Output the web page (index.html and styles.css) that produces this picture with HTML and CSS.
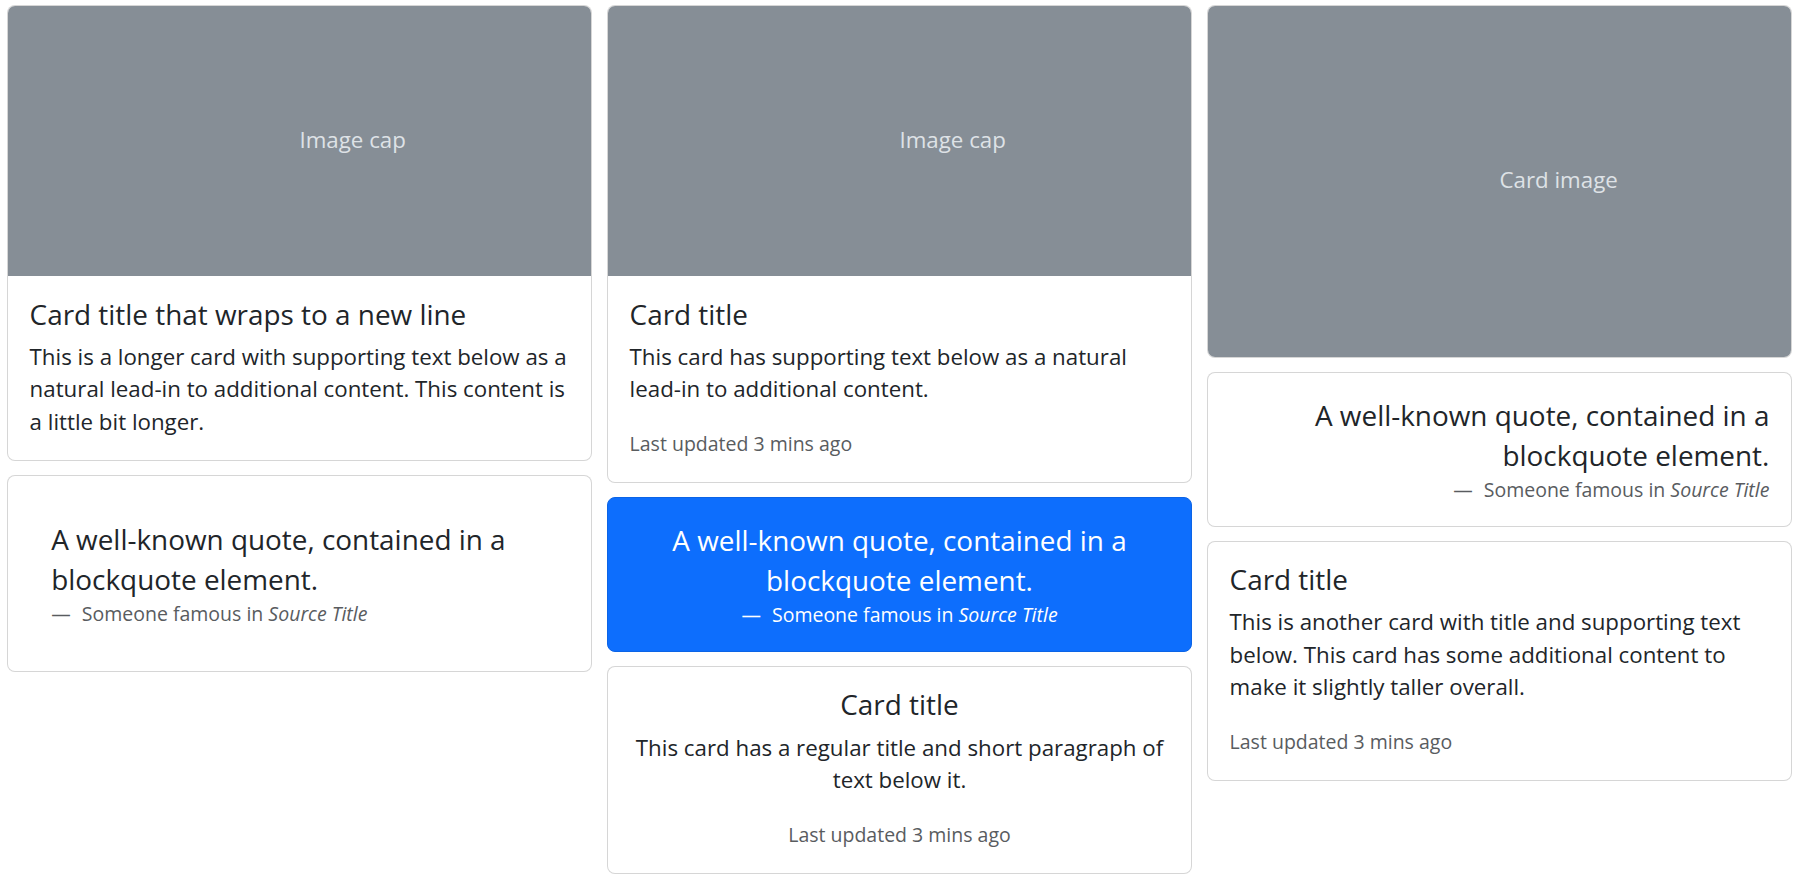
FILE: index.html
```html
<!DOCTYPE html>
<html lang="en">
<head>
<meta charset="utf-8">
<title>Masonry cards</title>
<link rel="stylesheet" href="styles.css">
</head>
<body>
<main class="masonry">
  <div class="stack">
    <div class="card">
      <svg class="ph ph-cap" width="100%" height="270" role="img" aria-label="Placeholder: Image cap">
        <rect width="100%" height="100%" fill="#868e96"></rect>
        <text x="50%" y="50%" dy=".3em">Image cap</text>
      </svg>
      <div class="card-body">
        <h5 class="card-title">Card title that wraps to a new line</h5>
        <p class="card-text">This is a longer card with supporting text below as a natural lead-in to additional content. This content is a little bit longer.</p>
      </div>
    </div>
    <div class="card pad">
      <figure class="quote pad">
        <blockquote class="blockquote"><p>A well-known quote, contained in a blockquote element.</p></blockquote>
        <figcaption class="blockquote-footer">Someone famous in <cite title="Source Title">Source Title</cite></figcaption>
      </figure>
    </div>
  </div>

  <div class="stack">
    <div class="card">
      <svg class="ph ph-cap" width="100%" height="270" role="img" aria-label="Placeholder: Image cap">
        <rect width="100%" height="100%" fill="#868e96"></rect>
        <text x="50%" y="50%" dy=".3em">Image cap</text>
      </svg>
      <div class="card-body">
        <h5 class="card-title">Card title</h5>
        <p class="card-text">This card has supporting text below as a natural lead-in to additional content.</p>
        <p class="card-text"><small class="muted">Last updated 3 mins ago</small></p>
      </div>
    </div>
    <div class="card pad primary center">
      <figure class="quote">
        <blockquote class="blockquote"><p>A well-known quote, contained in a blockquote element.</p></blockquote>
        <figcaption class="blockquote-footer on-primary">Someone famous in <cite title="Source Title">Source Title</cite></figcaption>
      </figure>
    </div>
    <div class="card center">
      <div class="card-body">
        <h5 class="card-title">Card title</h5>
        <p class="card-text">This card has a regular title and short paragraph of text below it.</p>
        <p class="card-text"><small class="muted">Last updated 3 mins ago</small></p>
      </div>
    </div>
  </div>

  <div class="stack">
    <div class="card">
      <svg class="ph ph-img" width="100%" height="351" role="img" aria-label="Placeholder: Card image">
        <rect width="100%" height="100%" fill="#868e96"></rect>
        <text x="50%" y="50%" dy=".3em">Card image</text>
      </svg>
    </div>
    <div class="card pad end">
      <figure class="quote">
        <blockquote class="blockquote"><p>A well-known quote, contained in a blockquote element.</p></blockquote>
        <figcaption class="blockquote-footer">Someone famous in <cite title="Source Title">Source Title</cite></figcaption>
      </figure>
    </div>
    <div class="card">
      <div class="card-body">
        <h5 class="card-title">Card title</h5>
        <p class="card-text">This is another card with title and supporting text below. This card has some additional content to make it slightly taller overall.</p>
        <p class="card-text"><small class="muted">Last updated 3 mins ago</small></p>
      </div>
    </div>
  </div>
</main>
</body>
</html>
```

FILE: styles.css
```css
* {
  box-sizing: border-box;
}

html, body {
  margin: 0;
  padding: 0;
  background: #fff;
}

body {
  font-family: "Open Sans", "Noto Sans", sans-serif;
  font-size: 22.3px;
  line-height: 32.4px;
  color: #212529;
}

.masonry {
  display: grid;
  grid-template-columns: repeat(3, 585px);
  column-gap: 15px;
  align-items: start;
  padding: 5px 0 0 7px;
}

.stack {
  display: flex;
  flex-direction: column;
  gap: 14px;
}

.card {
  background: #fff;
  border: 1px solid rgba(0, 0, 0, 0.16);
  border-radius: 8px;
  overflow: hidden;
}

.card.pad {
  padding: 21.6px;
}

.quote {
  margin: 0;
}

.quote.pad {
  padding: 21.6px;
}

.primary {
  background: #0d6efd;
  border-color: #0c64e6;
  color: #fff;
}

.center {
  text-align: center;
}

.end {
  text-align: right;
}

.ph {
  display: block;
}

.ph text {
  fill: #dee2e6;
  font-family: "Open Sans", "Noto Sans", sans-serif;
  font-size: 22.3px;
}

.card-body {
  padding: 21.6px;
}

.card-title {
  margin: 0 0 10.8px;
  font-size: 27.9px;
  line-height: 32.4px;
  font-weight: 400;
}

.card-text {
  margin: 0 0 21.6px;
}

.card-text:last-child {
  margin-bottom: 0;
}

.muted {
  font-size: 19.5px;
  color: #595c5f;
}

.blockquote {
  margin: 0 0 21.6px;
  font-size: 27.9px;
  line-height: 40.5px;
}

.blockquote p {
  margin: 0;
}

.blockquote-footer {
  margin-top: -21.6px;
  font-size: 19.5px;
  line-height: 28.35px;
  color: #595c5f;
}

.blockquote-footer::before {
  content: "\2014\00A0";
  padding-right: 6px;
}

.blockquote-footer.on-primary {
  color: #fff;
}

cite {
  font-style: italic;
}
```
